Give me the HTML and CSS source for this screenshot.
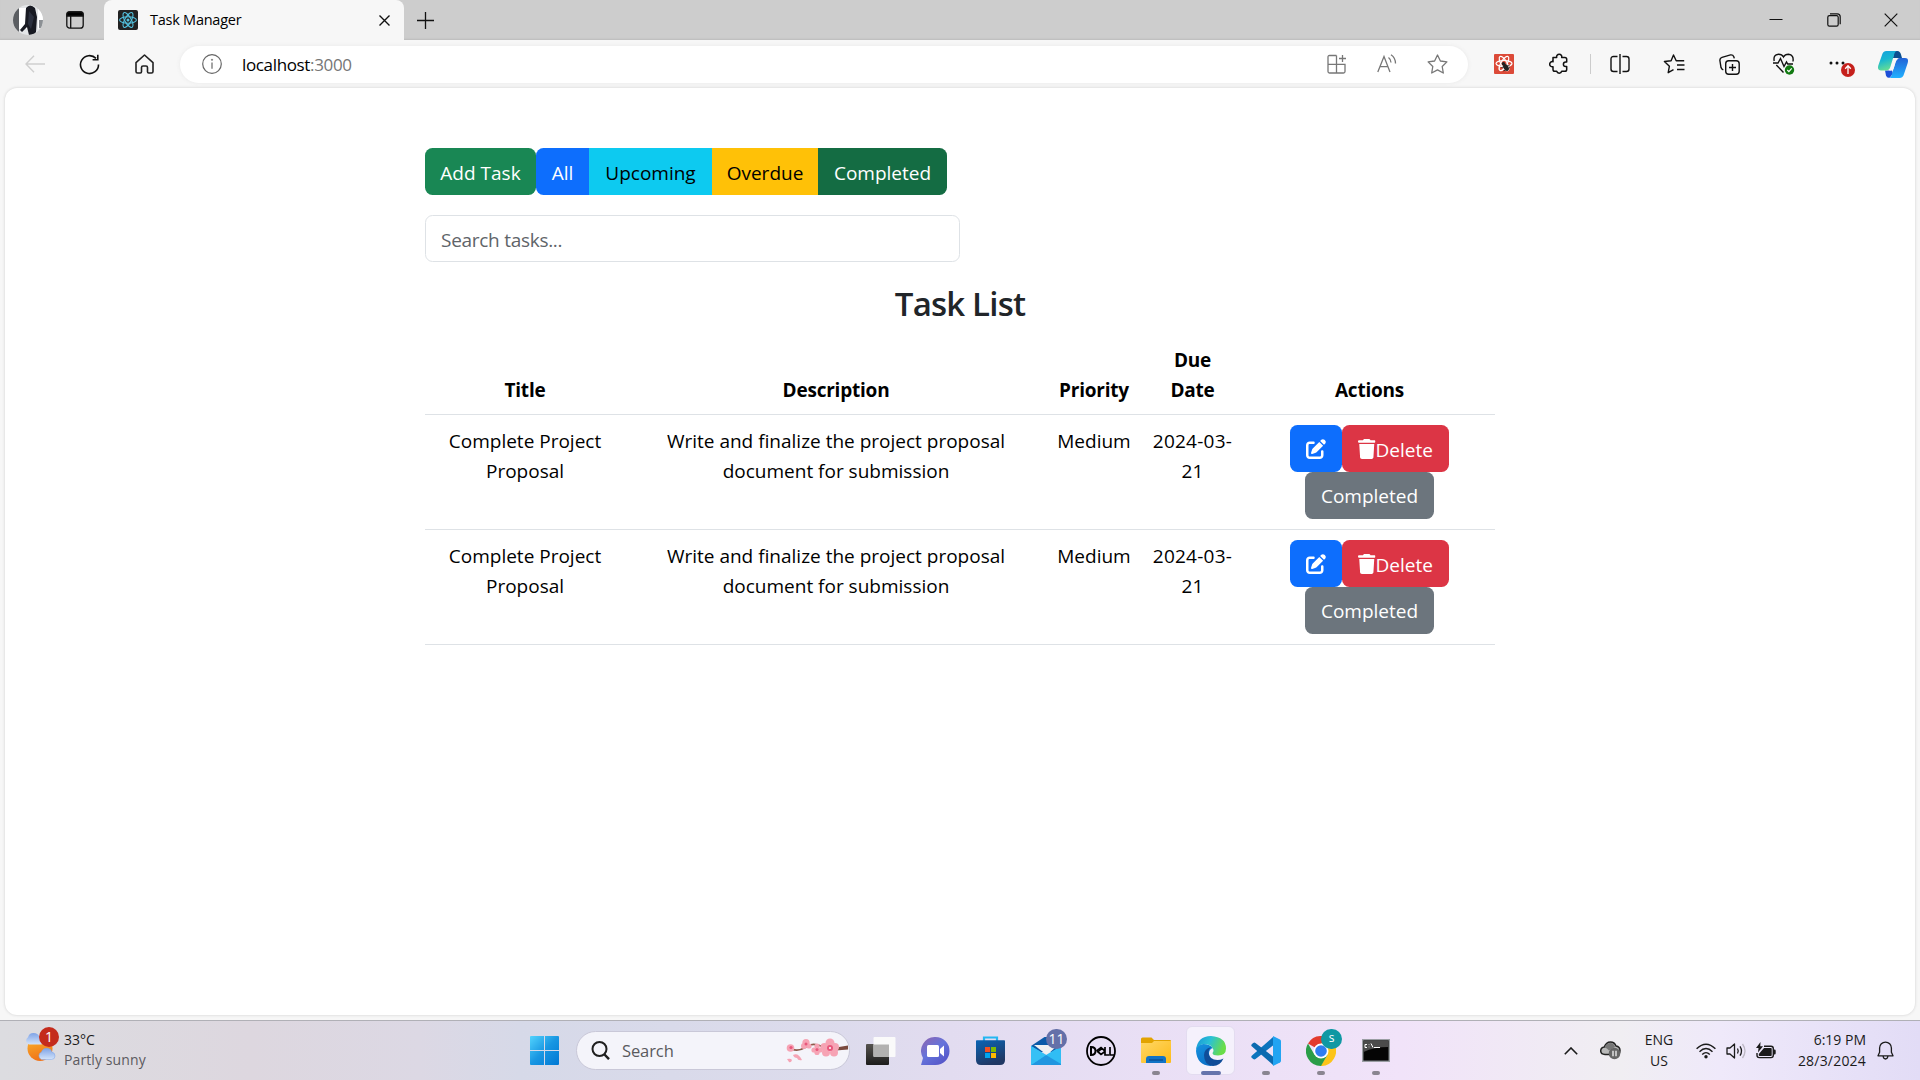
FILE: index.html
```html
<!DOCTYPE html>
<html lang="en">
<head>
<meta charset="utf-8">
<title>Task Manager</title>
<link rel="stylesheet" href="styles.css">
</head>
<body>
<svg class="defs" width="0" height="0" aria-hidden="true">
  <symbol id="pen" viewBox="0 0 512 512"><path d="M471.6 21.7c-21.9-21.9-57.3-21.9-79.2 0L362.3 51.7l97.9 97.9 30.1-30.1c21.9-21.9 21.9-57.3 0-79.2L471.6 21.7zm-299.2 220c-6.1 6.1-10.8 13.6-13.5 21.9l-29.6 88.8c-2.9 8.6-.6 18.1 5.8 24.6s15.9 8.7 24.6 5.8l88.8-29.6c8.2-2.7 15.7-7.4 21.9-13.5L437.7 172.3 339.7 74.3 172.4 241.7zM96 64C43 64 0 107 0 160V416c0 53 43 96 96 96H352c53 0 96-43 96-96V320c0-17.7-14.3-32-32-32s-32 14.3-32 32v96c0 17.7-14.3 32-32 32H96c-17.7 0-32-14.3-32-32V160c0-17.7 14.3-32 32-32h96c17.7 0 32-14.3 32-32s-14.3-32-32-32H96z"/></symbol>
  <symbol id="trash" viewBox="0 0 448 512"><path d="M135.2 17.7L128 32H32C14.3 32 0 46.3 0 64S14.3 96 32 96H416c17.7 0 32-14.3 32-32s-14.3-32-32-32H320l-7.2-14.3C307.4 6.8 296.3 0 284.2 0H163.8c-12.1 0-23.2 6.8-28.6 17.7zM416 128H32L53.2 467c1.6 25.3 22.6 45 47.9 45H346.9c25.3 0 46.3-19.7 47.9-45L416 128z"/></symbol>
</svg>

<header class="tabstrip">
  <div class="profile">
    <svg width="30" height="30" viewBox="0 0 30 30"><defs><clipPath id="av"><circle cx="15" cy="15" r="15"/></clipPath></defs><g clip-path="url(#av)"><path fill="#e4e6e8" d="M0 0h30v30H0z"/><path fill="#5b5e62" d="M0 0h6v30H0z"/><path fill="#fff" d="M6 3h8v21H6z"/><path fill="#181a22" d="M13 3q4-5 9 0l2 9-1 15q-3 5-7 3l-2-8-5 5-2-2 5-6z"/><path fill="#2b303e" d="M16 6l5 6-3 12-3-5z"/><path fill="#fff" d="M25 4v20l5-4V4z"/><path fill="#8c9094" d="M26 15h4v8h-4z"/></g></svg>
    <svg width="18" height="18" viewBox="0 0 18 18" fill="none" stroke="#111" stroke-width="1.3"><rect x=".8" y=".8" width="16.4" height="16.4" rx="3"/><path d="M4.7 5v12"/><path d="M1 4V3q0-2 2-2h12q2 0 2 2v2H1z" fill="#000"/></svg>
  </div>
  <div class="tab">
    <svg width="20" height="20" viewBox="0 0 20 20" fill="none" stroke="#53c1de" stroke-width="1.1"><rect width="20" height="20" rx="2" fill="#222" stroke="none"/><ellipse cx="10" cy="10" rx="8.4" ry="3.2"/><ellipse cx="10" cy="10" rx="8.4" ry="3.2" transform="rotate(60 10 10)"/><ellipse cx="10" cy="10" rx="8.4" ry="3.2" transform="rotate(120 10 10)"/><circle cx="10" cy="10" r="1.5" fill="#53c1de" stroke="none"/></svg>
    <span class="tab-title">Task Manager</span>
    <svg width="11" height="11" viewBox="0 0 11 11" stroke="#111" stroke-width="1.4"><path d="M.5.5l10 10M10.500.5l-10 10"/></svg>
  </div>
  <svg class="newtab" width="17" height="17" viewBox="0 0 17 17" stroke="#111" stroke-width="1.3"><path d="M8.500 0v17M0 8.500h17"/></svg>
  <div class="window-buttons">
    <svg width="14" height="14" viewBox="0 0 14 14"><path d="M.5 6.500h13" stroke="#111"/></svg>
    <svg width="14" height="14" viewBox="0 0 14 14" fill="none" stroke="#111" stroke-width="1.2"><rect x=".8" y="2.600" width="10.400" height="10.600" rx="1.600"/><path d="M3 .8h7.200q3 0 3 3v7.500"/></svg>
    <svg width="14" height="14" viewBox="0 0 14 14" stroke="#111" stroke-width="1.2"><path d="M.7.7l12.600 12.600M13.300.7L.7 13.300"/></svg>
  </div>
</header>

<nav class="toolbar">
  <div class="slot"><svg width="20" height="18" viewBox="0 0 20 18" fill="none" stroke="#cfcfcf" stroke-width="1.4"><path d="M20 9H1M9 .7L1 9l8 8.300"/></svg></div>
  <div class="slot"><svg width="21" height="21" viewBox="0 0 21 21" fill="none" stroke="#111" stroke-width="1.6"><path d="M19.500 10.500A9 9 0 1 1 17 4.400M18.800.8v5h-5.200"/></svg></div>
  <div class="slot"><svg width="19" height="20" viewBox="0 0 19 20" fill="none" stroke="#222" stroke-width="1.6" stroke-linejoin="round"><path d="M1 8.600L9.500 1 18 8.600V17.500q0 1.500-1.500 1.500h-2.800q-1.200 0-1.200-1.200v-4.300q0-1.500-1.500-1.500H8q-1.500 0-1.500 1.500v4.300q0 1.200-1.200 1.200H2.500Q1 19 1 17.500z"/></svg></div>
  <div class="address">
    <svg width="20" height="20" viewBox="0 0 20 20" fill="none" stroke="#666" stroke-width="1.2"><circle cx="10" cy="10" r="9.300"/><path d="M10 8.500v6.300"/><circle cx="10" cy="5.800" r=".7" fill="#666" stroke-width=".5"/></svg>
    <span class="url">localhost<span class="port">:3000</span></span>
    <div class="address-actions">
      <svg width="20" height="20" viewBox="0 0 20 20" fill="none" stroke="#777" stroke-width="1.300"><path d="M9.500 1.500H2.500q-1.500 0-1.500 1.500v14.500q0 1.500 1.500 1.500h14q1.500 0 1.500-1.500V10.300H1M9.500 1.500V19M15.500 1v7M12 4.500h7"/></svg>
      <svg width="20" height="20" viewBox="0 0 20 20" fill="none" stroke="#777" stroke-width="1.300"><path d="M.8 18L7 2.500 13 18M3 12.700h8M11.500 3.600q2.500 1.900 2.500 5M14 .8q4.500 3 4.500 8.800"/></svg>
      <svg width="21" height="20" viewBox="0 0 21 20" fill="none" stroke="#777" stroke-width="1.300" stroke-linejoin="round"><path d="M10.500 1l2.900 6 6.500.9-4.700 4.600 1.100 6.500-5.800-3.100L4.700 19l1.100-6.500L1.100 7.900l6.500-.9z"/></svg>
    </div>
  </div>
  <div class="tools">
    <div class="slot"><svg width="20" height="20" viewBox="0 0 20 20" fill="none" stroke="#fff" stroke-width="1.200"><rect width="20" height="20" rx="1" fill="#dc4a38" stroke="none"/><ellipse cx="10" cy="9.500" rx="8" ry="3"/><ellipse cx="10" cy="9.500" rx="8" ry="3" transform="rotate(60 10 9.500)"/><ellipse cx="10" cy="9.500" rx="8" ry="3" transform="rotate(120 10 9.500)"/><ellipse cx="12" cy="13.500" rx="2.400" ry="3.800" fill="#222" stroke="none" transform="rotate(-30 12 13.500)"/><circle cx="9.500" cy="9.800" r="1.800" fill="#222" stroke="none"/><path d="M7.500 13.500l8-2M9.500 17l6.500-3.500" stroke="#222" stroke-width=".9"/></svg></div>
    <div class="slot"><svg width="20" height="22" viewBox="0 0 20 22" fill="none" stroke="#111" stroke-width="1.500" stroke-linejoin="round"><path d="M4 4.500h3.700a2.600 2.600 0 1 1 5 0h3.200q1.800 0 1.800 1.800v2.600h-1a2.300 2.300 0 0 0 0 4.600h1v3q0 1.800-1.800 1.800h-3.200a2.600 2.600 0 0 1-5 0H5.800Q4 18.300 4 16.500v-2.800a2.600 2.600 0 1 1 0-5z"/></svg></div>
    <div class="divider"></div>
    <div class="slot"><svg width="20" height="20" viewBox="0 0 20 20" fill="none" stroke="#111" stroke-width="1.400"><path d="M7.500 2.500h-4Q1 2.500 1 5v10q0 2.500 2.500 2.500h4M12.500 2.500h4Q19 2.500 19 5v10q0 2.500-2.500 2.500h-4M10 0v20"/></svg></div>
    <div class="slot"><svg width="22" height="20" viewBox="0 0 22 20" fill="none" stroke="#111" stroke-width="1.400" stroke-linejoin="round"><path d="M10.500 15.700L5.200 18.700l1.200-6.500-5-4.700 6.700-.7L10.500 1l2.700 5.800h8M14 11h7.500M14 15.500h7.500"/></svg></div>
    <div class="slot"><svg width="21" height="21" viewBox="0 0 21 21" fill="none" stroke="#111" stroke-width="1.400"><rect x="6.700" y="6.700" width="13.500" height="13.500" rx="3"/><path d="M13.500 10v7M10 13.500h7M4.300 15.800Q2.600 15.200 2 13.500L.9 6.500Q.7 4 3 3.300l8.500-2.400Q14 .6 14.800 2.700l.5 1.700"/></svg></div>
    <div class="slot"><svg width="22" height="22" viewBox="0 0 22 22" fill="none" stroke="#111" stroke-width="1.400"><path d="M1.200 8Q0 1.800 5.500 1.200q3.500 0 5 2.800Q12 1.200 15.500 1.200 21 1.800 20 8.500M3.300 12l7.200 7.500M0 10h5l2.500-4.500 3.500 8L13.500 9l1.200 2H20"/><circle cx="16.500" cy="17" r="4.700" fill="#127a12" stroke="none"/><path d="M14.300 17l1.600 1.600 2.800-3.200" stroke="#fff" stroke-width="1.200"/></svg></div>
    <div class="slot more"><svg width="28" height="28" viewBox="0 0 28 28"><g fill="#111"><circle cx="3" cy="11" r="1.500"/><circle cx="9" cy="11" r="1.500"/><circle cx="15" cy="11" r="1.500"/></g><circle cx="20" cy="18" r="7" fill="#c5201c"/><path d="M20 22v-8M17.200 16.700l2.800-2.900 2.800 2.900" stroke="#fff" stroke-width="1.300" fill="none"/></svg></div>
    <div class="slot copilot"><svg width="30" height="27" viewBox="0 0 30 27"><defs><linearGradient id="cp1" x2=".3" y2="1"><stop stop-color="#13a0dd"/><stop offset=".5" stop-color="#19b7d0"/><stop offset="1" stop-color="#62dc97"/></linearGradient><linearGradient id="cp2" x1=".5" x2=".5" y2="1"><stop stop-color="#2262d6"/><stop offset="1" stop-color="#21b1ff"/></linearGradient></defs><path fill="#0b4f91" d="M16 0h3.500q2.500 0 3.500 3.500l1 3.500h-9z"/><path fill="#1c4fd8" d="M7 19.500h7l1 3-3 4q-3 1-4-2z"/><path fill="url(#cp1)" d="M8.500 0H19q-2 0-3 4l-3.500 11.500Q11.500 19.500 8 19.500H3q-4 0-2.700-5L4 4q1-4 4.500-4z"/><path fill="url(#cp2)" d="M21.500 27H11q2 0 3-4l3.500-12q1-4 4.500-4h5q4 0 2.700 5L26 23q-1 4-4.500 4z"/><path fill="#f7f7f7" d="M17.500 7.500h3q-2 1-2.800 3.500l-2 6.500q-.8 2-3.200 2h-1.500q1.200-1 1.800-3l2-6.500q.7-2 2.700-2.500z"/></svg></div>
  </div>
</nav>

<div class="viewport">
  <main class="page">
    <div class="filters">
      <button class="btn btn-success w-add">Add Task</button>
      <div class="group">
        <button class="btn btn-primary w-all">All</button>
        <button class="btn btn-info w-upcoming">Upcoming</button>
        <button class="btn btn-warning w-overdue">Overdue</button>
        <button class="btn btn-done w-completed">Completed</button>
      </div>
    </div>
    <input class="search" type="text" placeholder="Search tasks...">
    <h3 class="heading">Task List</h3>
    <table class="tasks">
      <colgroup><col class="c-title"><col class="c-desc"><col class="c-priority"><col class="c-due"><col class="c-actions"></colgroup>
      <thead>
        <tr><th>Title</th><th>Description</th><th>Priority</th><th>Due<br>Date</th><th>Actions</th></tr>
      </thead>
      <tbody>
        <tr>
          <td>Complete Project<br>Proposal</td>
          <td>Write and finalize the project proposal<br>document for submission</td>
          <td>Medium</td>
          <td class="due">2024-03-<br>21</td>
          <td class="actions"><div class="action-list"><button class="btn btn-primary w-edit"><svg width="20" height="20" fill="#fff"><use href="#pen"/></svg></button><button class="btn btn-danger w-delete"><svg width="17.500" height="20" fill="#fff"><use href="#trash"/></svg><span class="delete-label">Delete</span></button><button class="btn btn-secondary w-completed">Completed</button></div></td>
        </tr>
        <tr>
          <td>Complete Project<br>Proposal</td>
          <td>Write and finalize the project proposal<br>document for submission</td>
          <td>Medium</td>
          <td class="due">2024-03-<br>21</td>
          <td class="actions"><div class="action-list"><button class="btn btn-primary w-edit"><svg width="20" height="20" fill="#fff"><use href="#pen"/></svg></button><button class="btn btn-danger w-delete"><svg width="17.500" height="20" fill="#fff"><use href="#trash"/></svg><span class="delete-label">Delete</span></button><button class="btn btn-secondary w-completed">Completed</button></div></td>
        </tr>
      </tbody>
    </table>
  </main>
</div>

<footer class="taskbar">
  <div class="weather">
    <svg width="35" height="36" viewBox="0 0 35 36"><defs><linearGradient id="sun" x2=".3" y2="1"><stop stop-color="#fbb72c"/><stop offset="1" stop-color="#f0741a"/></linearGradient><linearGradient id="cl" x2="0" y2="1"><stop stop-color="#7fa3e6"/><stop offset="1" stop-color="#d3e4fb"/></linearGradient></defs><circle cx="15" cy="21.500" r="12.500" fill="url(#sun)"/><path fill="url(#cl)" d="M4 17.500a4 4 0 0 1-1-7.200Q4 6 8.500 6t6 4q5 .5 5 4.500 0 3-4 3z"/><path fill="url(#cl)" stroke="#7ea5e8" stroke-width=".5" d="M16.500 32.500a4 4 0 0 1 0-7.500q1.500-4 5.500-3.700 4 .2 5 4 3 .3 3 3.700t-3.500 3.500z"/><circle cx="24" cy="10" r="10" fill="#c42b1c"/><text x="24" y="15" text-anchor="middle" class="badge-text">1</text></svg>
    <div class="weather-text"><div>33°C</div><div class="condition">Partly sunny</div></div>
  </div>
  <div class="start"><svg width="29" height="29" viewBox="0 0 29 29"><defs><linearGradient id="win" x2="1" y2="1"><stop stop-color="#52d3fd"/><stop offset=".5" stop-color="#1896e2"/><stop offset="1" stop-color="#0078d4"/></linearGradient></defs><path fill="url(#win)" d="M1 0h13v14H0V1q0-1 1-1zM15 0h13q1 0 1 1v13H15zM0 15h14v14H1q-1 0-1-1zM15 15h14v13q0 1-1 1H15z"/></svg></div>
  <div class="search-pill">
    <svg width="19" height="19" viewBox="0 0 19 19" fill="none" stroke="#1f1f1f" stroke-width="2"><circle cx="8.500" cy="8" r="7"/><path d="M13 13l5 5.200" stroke-width="2.400"/></svg>
    <span class="search-label">Search</span>
    <svg width="62" height="26" viewBox="0 0 62 26"><path d="M6 11q6 3 14-2 5-4 12-2t12 5" fill="none" stroke="#8c5a4a" stroke-width="1.600"/><path d="M50 9.500l12-2v4l-12 1z" fill="#7a4a3e"/><g fill="#f6a3b4"><circle cx="4.500" cy="10" r="3.800"/><circle cx="20" cy="4.500" r="3.600"/><circle cx="18" cy="8" r="3"/><circle cx="23" cy="8" r="2.600"/><circle cx="31" cy="8" r="2.600"/><circle cx="28" cy="12" r="2.600"/><circle cx="34" cy="12" r="2.600"/><circle cx="31" cy="14.500" r="2.600"/><circle cx="44" cy="5" r="4.500"/><circle cx="38.500" cy="9" r="4"/><circle cx="49" cy="9" r="4"/><circle cx="40" cy="14.500" r="4"/><circle cx="48" cy="14.500" r="4"/><path d="M1 21q4-1 5 1-1 3-3 2zM7 17q5-3 9 5-4 1-5-2-3 0-4-3z"/></g><g fill="#e8577c"><circle cx="44" cy="10" r="3"/><circle cx="31" cy="11.500" r="1.500"/><circle cx="20" cy="6" r="1.500"/><circle cx="5" cy="9.500" r="1.600"/></g><circle cx="44" cy="10" r="1" fill="#fff"/></svg>
  </div>
  <div class="apps">
    <div class="app"><svg width="30" height="28" viewBox="0 0 30 28"><defs><linearGradient id="tv" x2="0" y2="1"><stop stop-color="#55534f"/><stop offset="1" stop-color="#1d1c1b"/></linearGradient></defs><rect x="0" y="7" width="23" height="21" rx="1" fill="url(#tv)"/><rect x="7.500" y="0" width="22" height="20" rx="1" fill="#fafafa"/><path fill="#b2b1b0" d="M7.500 7.500H23V20H8.500q-1 0-1-1z"/></svg></div>
    <div class="app"><svg width="29" height="28" viewBox="0 0 29 28"><defs><linearGradient id="chat" x2=".8" y2="1"><stop stop-color="#9164ad"/><stop offset=".5" stop-color="#6574db"/><stop offset="1" stop-color="#5454c7"/></linearGradient></defs><path fill="url(#chat)" d="M14.500 0a14 14 0 0 1 0 28H0l2-7A14 14 0 0 1 14.500 0z"/><rect x="6" y="8" width="12" height="12" rx="1.500" fill="#fff"/><path fill="#fff" d="M19 12l4-3.500v11L19 16z"/></svg></div>
    <div class="app"><svg width="29" height="29" viewBox="0 0 29 29"><defs><linearGradient id="st" x2=".4" y2="1"><stop stop-color="#0a64b5"/><stop offset="1" stop-color="#203864"/></linearGradient></defs><path d="M8 6V1.500h13V6" fill="none" stroke="#25b7f2" stroke-width="2.200"/><path fill="url(#st)" d="M0 5q0-.8.800-.8h27.400q.8 0 .8.800v19q0 5-5 5H5q-5 0-5-5z"/><path fill="#f25022" d="M9 11h5v5H9z"/><path fill="#7fba00" d="M15 11h5v5h-5z"/><path fill="#00a4ef" d="M9 17h5v5H9z"/><path fill="#ffb900" d="M15 17h5v5h-5z"/></svg></div>
    <div class="app"><svg width="30" height="28" viewBox="0 0 30 28"><path fill="#0b5aa8" d="M0 9L15-1 30 9v6H0z"/><path fill="#f1f1f1" d="M3 8h24l-11 10z"/><path fill="#30bdf4" d="M0 9l15 9 15-9v19H0z"/><path fill="#1f8fdc" d="M15 18l15 9v1H0l15-10z" opacity=".85"/><path fill="#35c0f5" d="M0 9l15 9L0 28z"/></svg><span class="count">11</span></div>
    <div class="app"><svg width="30" height="30" viewBox="0 0 30 30"><circle cx="15" cy="15" r="14" fill="none" stroke="#000" stroke-width="1.800"/><g fill="none" stroke="#000" stroke-width="2"><path d="M5 11v8q4.500 0 4.500-4T5 11z"/><path d="M10.500 15l4.500-3.500 4 3.500M11 15l4 3.500 4-3M12.500 15l3.500-2.500M19 11v8h4M24 11v8h4" stroke-width="1.700"/></g></svg></div>
    <div class="app"><svg width="30" height="27" viewBox="0 0 30 27"><defs><linearGradient id="fo" x2="1" y2="1"><stop stop-color="#ffd766"/><stop offset="1" stop-color="#fdbb18"/></linearGradient></defs><path fill="#e2a300" d="M0 2q0-1.500 1.500-1.500h9L13 3h16q1 0 1 1v6H0z"/><path fill="url(#fo)" d="M0 6h11l2-2h17v21q0 1-1 1H1q-1 0-1-1z"/><path fill="#1173c6" d="M5 26v-4q0-3 3-3h14q3 0 3 3v4z"/><path stroke="#0a4d90" stroke-width="1.300" d="M8 23h14"/></svg><i class="dot"></i></div>
    <div class="app active"><svg width="30" height="30" viewBox="0 0 30 30"><defs><linearGradient id="ed1" x2="1" y2=".3"><stop stop-color="#1794d9"/><stop offset=".5" stop-color="#2bc1d5"/><stop offset="1" stop-color="#69dd49"/></linearGradient><linearGradient id="ed2" x2=".5" y2="1"><stop stop-color="#1692df"/><stop offset="1" stop-color="#0b70c7"/></linearGradient></defs><path fill="url(#ed2)" d="M0 15Q0 8 7.500 8q6 0 9.500 4-4 1-4 5.500 0 6 8 9.500-3 3-6.500 3Q1 29 0 15z"/><path fill="#104d99" d="M8 19q0-6 7-8-3 3-2.500 6 1 7 9 7 3 0 6-1.500Q24 30 17 30 8 29 8 19z"/><path fill="url(#ed1)" d="M0 14Q1.500 0 15 0q15 1 15 12.500 0 7-8 7-5.500 0-5.500-2.500 1-1 1-3Q16 8 8 8q-5.500.3-8 6z"/></svg><i class="dot"></i></div>
    <div class="app"><svg width="30" height="30" viewBox="0 0 30 30"><path fill="#0c74bd" d="M1 19.500q-1.500 1.300 0 2.600l1.200 1q1.100.8 2.300 0L22 9.500V1z"/><path fill="#0b6ab0" d="M1 10.500q-1.500-1.300 0-2.600l1.200-1q1.100-.8 2.300 0L22 20.500V29z"/><path fill="#22a4f2" d="M22 0l7 3.500q1 .5 1 1.700v19.600q0 1.200-1 1.700L22 30z"/></svg><i class="dot"></i></div>
    <div class="app"><svg width="30" height="30" viewBox="0 0 30 30"><path fill="#e33b2e" d="M15 15L2 7.500A15 15 0 0 1 28 7.500H15z"/><path fill="#fcc419" d="M15 15l0-7.500h13A15 15 0 0 1 14.500 30l7-11.200z"/><path fill="#2a9d48" d="M15 15l6.500 3.800L15 30A15 15 0 0 1 2 7.500l6.500 11.300z"/><circle cx="15" cy="15" r="7.500" fill="#fff"/><circle cx="15" cy="15" r="5.800" fill="#2f7df0"/></svg><span class="count teal">s</span><i class="dot"></i></div>
    <div class="app"><svg width="28" height="23" viewBox="0 0 28 23"><rect x=".7" y=".7" width="26.600" height="21.600" fill="#050505" stroke="#9a9ea3" stroke-width="1.400"/><path fill="#4b4b4b" d="M1.500 1.500h25V8Q12 8 1.500 13z"/><path d="M5 5.500H3v3h2M7 5.500v.6M7 7.700v.6M9 4.500l2 4M12 8.500h6" stroke="#fff" fill="none"/></svg><i class="dot"></i></div>
  </div>
  <div class="tray">
    <svg class="chev" width="14" height="8" viewBox="0 0 14 8" fill="none" stroke="#1b1b1b" stroke-width="1.600"><path d="M.8 7.200L7 1l6.200 6.200"/></svg>
    <svg class="cloud" width="21" height="19" viewBox="0 0 21 19"><path d="M5 13.500q-4.300-.2-4.300-3.700Q.8 6.500 4.300 6 6 .9 10.500.9q4 0 5.500 4 4 .5 4 4.600 0 4-4 4z" fill="#b9b9b9" stroke="#222" stroke-width="1.500"/><path d="M4.500 6.500Q6.500 2 10.500 2q3.500 0 4.500 4L9 9.500Q7 7 4.500 6.500z" fill="#777"/><circle cx="14.500" cy="12.500" r="5.800" fill="#666"/><path d="M13 9.800v5.400M16 9.800v5.400" stroke="#fff" stroke-width="1.200"/></svg>
    <div class="lang">ENG<br>US</div>
    <svg class="wifi" width="20" height="16" viewBox="0 0 20 16" fill="none" stroke="#1b1b1b" stroke-width="1.400"><path d="M.6 5.800Q10-3.500 19.400 5.800M3.500 8.700q6.500-6.500 13 0M6.200 11.500q3.800-3.800 7.600 0"/><circle cx="10" cy="13.800" r="1.700" fill="#1b1b1b" stroke="none"/></svg>
    <svg class="vol" width="20" height="16" viewBox="0 0 20 16" fill="none" stroke="#1b1b1b" stroke-width="1.300" stroke-linejoin="round"><path d="M1 5h3l4.500-4v14L4 11H1zM11.500 5.500q1.500 2.500 0 5M14 3.300q3 4.700 0 9.400"/><path stroke="#bdb8c4" d="M16.500 1q5 7 0 14"/></svg>
    <svg class="bat" width="20" height="17" viewBox="0 0 20 17"><path d="M8 4.300h7q2.300 0 2.300 2.300v6.700q0 2.300-2.300 2.300H3.300Q1 15.600 1 13.300V11" fill="none" stroke="#1b1b1b" stroke-width="1.400"/><path fill="#1b1b1b" d="M8 6h7q.7 0 .7.700v6.500q0 .8-.7.800H3.600q-.8 0-.8-.8V12zM17.800 7.500h.7q1.200 0 1.200 1.200v2.600q0 1.200-1.200 1.200h-.7zM4.500 0L0 6h2.500L2 10.500 7 4.300H4.300z"/></svg>
    <div class="clock">6:19 PM<br><span class="date">28/3/2024</span></div>
    <svg width="17" height="19" viewBox="0 0 17 19" fill="none" stroke="#1b1b1b" stroke-width="1.300" stroke-linejoin="round"><path d="M1 14.800l1.600-3.500V7a5.900 5.900 0 0 1 11.800 0v4.300l1.600 3.500zM6 15q.5 3 2.500 3t2.500-3"/></svg>
  </div>
</footer>
</body>
</html>
```
FILE: styles.css
```css
* { box-sizing: border-box; }

body {
  margin: 0;
  width: 1920px;
  height: 1080px;
  overflow: hidden;
  display: flex;
  flex-direction: column;
  background: #f7f7f7;
  font-family: "Open Sans", "Noto Sans", sans-serif;
  color: #000;
}

svg { flex: none; display: block; }
.defs { position: absolute; }

/* Tab strip */
.tabstrip {
  height: 40px;
  flex: none;
  display: flex;
  align-items: center;
  background: #cdcdcd;
  box-shadow: inset 0 -2px 2px -1px #bcbcbc;
}
.profile { width: 104px; display: flex; align-items: center; gap: 23px; padding-left: 13px; }
.tab {
  width: 300px;
  height: 40px;
  display: flex;
  align-items: center;
  padding: 0 14px;
  background: #f7f7f7;
  border-radius: 8px 8px 0 0;
}
.tab-title { flex: 1; padding: 0 0 2px 12px; font-size: 14.5px; letter-spacing: -0.25px; }
.newtab { margin-left: 13px; }
.window-buttons { margin-left: auto; display: flex; gap: 43.500px; padding-right: 22px; }

/* Address row */
.toolbar { height: 48px; flex: none; display: flex; align-items: center; padding-left: 7px; }
.slot { width: 55px; display: flex; justify-content: center; }
.address {
  width: 1288px;
  height: 37px;
  margin-left: 8px;
  display: flex;
  align-items: center;
  padding: 0 20px 0 22px;
  border-radius: 19px;
  background: #fff;
  box-shadow: 0 0 4px #e8e8e8;
}
.url { flex: 1; padding-left: 20px; font-size: 17px; letter-spacing: -0.35px; }
.port { color: #767676; }
.address-actions { display: flex; gap: 30px; }
.tools { display: flex; align-items: center; padding-left: 8.500px; }
.divider { width: 1.500px; height: 20px; margin: 0 1.500px 0 3px; background: #ccc; }
.tools .divider + .slot { width: 54px; }
.more { padding: 4px 0 0 6px; }
.copilot { width: 52px; }

/* Page frame */
.viewport {
  height: 927px;
  flex: none;
  margin: 0 5px 5px;
  background: #fff;
  border-radius: 12px;
  box-shadow: 0 0 3px #ccc;
}
.page { width: 1070px; margin: 0 auto; padding-top: 60px; font-size: 19px; line-height: 30px; }
.filters, .group { display: flex; }
.group { border-radius: 7.500px; overflow: hidden; }

.btn {
  height: 47px;
  display: flex;
  align-items: center;
  justify-content: center;
  border: 0;
  padding: 2px 0 0;
  font: inherit;
  color: #fff;
  border-radius: 7.500px;
  white-space: nowrap;
}
.group .btn { border-radius: 0; }
.btn-success { background: #198754; }
.btn-primary { background: #0d6efd; }
.btn-info { background: #0dcaf0; color: #000; }
.btn-warning { background: #ffc107; color: #000; }
.btn-done { background: #146c43; }
.btn-danger { background: #dc3545; }
.btn-secondary { background: #6c757d; }
.w-add { width: 111px; }
.w-all { width: 53px; }
.w-upcoming { width: 123px; }
.w-overdue { width: 106px; }
.w-completed { width: 129px; }
.w-edit { width: 52px; }
.w-delete { width: 107px; }
.w-edit, .w-delete { padding-top: 1px; }
.delete-label { padding-top: 2px; }

.search {
  display: block;
  width: 535px;
  height: 47px;
  margin: 20px 0;
  padding: 3px 15px 0;
  border: 1px solid #dee2e6;
  border-radius: 7.500px;
  font: inherit;
  letter-spacing: -0.28px;
  background: #fff;
}
.search::placeholder { color: #5f6469; opacity: 1; }

.heading {
  margin: 0 0 9px;
  padding-top: 1px;
  text-align: center;
  font-size: 33px;
  line-height: 42px;
  font-weight: 600;
  letter-spacing: -0.8px;
  color: #212529;
}

.tasks { width: 1070px; table-layout: fixed; border-collapse: collapse; text-align: center; }
.c-title { width: 200px; }
.c-desc { width: 422px; }
.c-priority { width: 94px; }
.c-due { width: 103px; }
.c-actions { width: 251px; }
.tasks th, .tasks td { padding: 10px 0; border-bottom: 1px solid #dee2e6; vertical-align: top; white-space: nowrap; }
.tasks th { height: 80px; vertical-align: bottom; padding-bottom: 9px; font-weight: 700; letter-spacing: -0.22px; }
.tasks td { height: 115px; padding-top: 11px; }
.tasks .due { letter-spacing: 0.25px; }
.tasks .actions { padding: 10px 0 9px; }
.action-list { width: 159px; height: 94px; margin: 0 auto; display: flex; flex-wrap: wrap; justify-content: center; }

/* Taskbar */
.taskbar {
  height: 60px;
  flex: none;
  display: flex;
  align-items: center;
  border-top: 1px solid #b0b0b6;
  background: linear-gradient(90deg, #dcdce0 0, #ddd7df 250px, #dcd8e4 420px, #d6d9e8 520px, #dcdbec 820px, #e2dcf0 950px, #e9dff5 1150px, #f1e3f9 1400px, #f0eef2 1620px, #efe9fa 1720px, #e2dcf6 1920px);
}
.weather { width: 517px; display: flex; gap: 4px; padding: 0 0 4px 25px; }
.weather-text { font-size: 14px; line-height: 20px; padding-top: 3px; color: #1b1b1b; }
.condition { color: #5c5a60; letter-spacing: 0.1px; }
.badge-text { font-size: 14px; fill: #fff; }
.start { width: 55px; display: flex; justify-content: center; }
.search-pill {
  width: 274px;
  height: 39px;
  margin-left: 4px;
  display: flex;
  align-items: center;
  padding: 0 1px 0 14px;
  border-radius: 20px;
  border: 1px solid #c9c8d8;
  background: #f4f4fa;
}
.search-label { flex: 1; padding-left: 12px; font-size: 16.500px; letter-spacing: -0.1px; color: #5a5a5e; }
.apps { display: flex; padding-left: 3px; }
.app { position: relative; width: 55px; height: 49px; display: flex; align-items: center; justify-content: center; }
.active { width: 49px; margin: 0 3px; background: #f5f1fc; border: 1px solid #e3dcf0; border-radius: 6px; }
.dot { position: absolute; bottom: 0; left: 50%; width: 8px; height: 4px; margin-left: -4px; border-radius: 2px; background: #8a8590; }
.active .dot { width: 20px; margin-left: -10px; bottom: -1px; background: #6573ab; }
.count {
  position: absolute;
  left: 28px;
  top: 3px;
  width: 21px;
  height: 20px;
  border-radius: 10px;
  background: #6470a8;
  color: #fff;
  font-size: 14px;
  line-height: 20px;
  text-align: center;
}
.teal { background: #0f98a3; font-size: 12px; line-height: 18px; }
.tray { margin-left: auto; display: flex; align-items: center; padding-right: 26px; color: #1b1b1b; font-size: 14px; line-height: 20.500px; }
.cloud { margin-left: 22px; }
.lang { width: 50px; margin-left: 13px; text-align: center; }
.wifi { margin-left: 12px; }
.vol { margin-left: 10px; }
.bat { margin-left: 10px; }
.clock { width: 90px; margin-right: 11px; text-align: right; white-space: nowrap; }
.date { letter-spacing: 0.2px; }
```
